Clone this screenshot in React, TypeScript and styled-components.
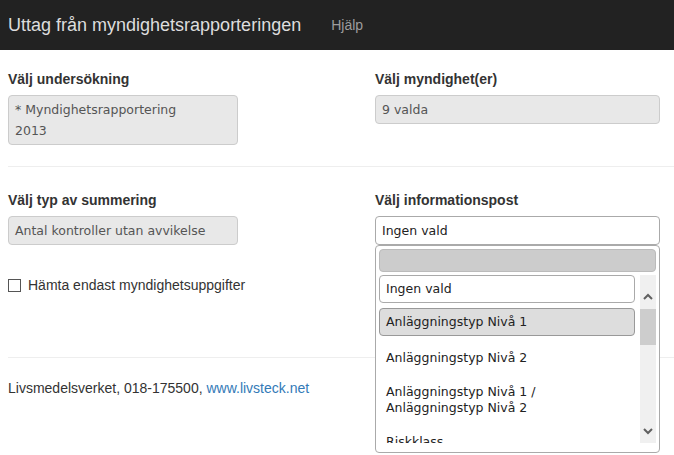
import React from 'react';
import styled, { createGlobalStyle } from 'styled-components';

const Global = createGlobalStyle`
  body { margin: 0; min-height: 455px; font-family: "Liberation Sans", Arial, sans-serif; font-size: 14px; color: #333; background: #fff; }
`;

const Navbar = styled.header`
  height: 50px;
  background: #222;
  display: flex;
  align-items: center;
  padding-left: 8px;
  gap: 30px;
`;
const Brand = styled.div`
  color: #ddd;
  font-size: 18px;
`;
const NavLink = styled.div`
  color: #9d9d9d;
  font-size: 14px;
`;

const Row = styled.div`
  display: grid;
  grid-template-columns: 367px 1fr;
  padding: 0 8px;
`;
const Field = styled.div`
  position: relative;
`;
const Label = styled.div`
  font-weight: bold;
  font-size: 14px;
  height: 17px;
  margin-bottom: 7px;
`;
const Box = styled.div<{ $w: number; $white?: boolean; $padRight?: number }>`
  width: ${p => p.$w}px;
  box-sizing: border-box;
  font-family: "DejaVu Sans", Verdana, sans-serif;
  font-size: 12.5px;
  line-height: 21px;
  padding: 3px ${p => p.$padRight ?? 6}px 3px 6px;
  border: 1px solid ${p => (p.$white ? '#aaa' : '#ccc')};
  border-radius: 4px;
  background: ${p => (p.$white ? '#fff' : '#e8e8e8')};
  color: ${p => (p.$white ? '#222' : '#555')};
`;
const Divider = styled.hr`
  border: 0;
  border-top: 1px solid #eee;
  margin: 21px 0 25px 8px;
`;
const Check = styled.label`
  display: flex;
  align-items: center;
  gap: 7px;
  margin-top: 32px;
  font-size: 14px;
`;
const CheckBox = styled.span`
  width: 11px;
  height: 11px;
  border: 1px solid #555;
  background: #fff;
`;
const Footer = styled.div`
  border-top: 1px solid #eee;
  margin: 64px 0 0 8px;
  padding-top: 22px;
  font-size: 14px;
`;
const Link = styled.a`
  color: #337ab7;
  text-decoration: none;
`;

const Dropdown = styled.div`
  position: absolute;
  left: 0;
  top: 53px;
  width: 285px;
  height: 208px;
  box-sizing: border-box;
  background: #fff;
  border: 1px solid #aaa;
  border-radius: 4px;
  padding: 3px;
  font-family: "DejaVu Sans", Verdana, sans-serif;
  font-size: 12.5px;
  color: #222;
  z-index: 2;
`;
const Search = styled.div`
  height: 23px;
  background: #ccc;
  border: 1px solid #bbb;
  border-radius: 4px;
  box-sizing: border-box;
`;
const ListWrap = styled.div`
  display: flex;
  margin-top: 3px;
  height: 168px;
`;
const List = styled.div`
  flex: 1;
  padding-right: 5px;
  overflow: hidden;
`;
const Item = styled.div<{ $kind?: 'box' | 'active' }>`
  padding: ${p => (p.$kind ? '5px' : '8px')} 6px;
  line-height: 16px;
  margin-bottom: ${p => (p.$kind ? '5px' : '0')};
  border-radius: 4px;
  border: 1px solid ${p => (p.$kind === 'box' ? '#aaa' : p.$kind === 'active' ? '#999' : 'transparent')};
  background: ${p => (p.$kind === 'active' ? '#ddd' : 'transparent')};
`;
const Scrollbar = styled.div`
  width: 16px;
  background: #f0f0f0;
  display: flex;
  flex-direction: column;
  align-items: center;
  justify-content: space-between;
  padding: 18px 0 8px;
  box-sizing: border-box;
  position: relative;
`;
const Thumb = styled.div`
  position: absolute;
  top: 34px;
  left: 0;
  width: 16px;
  height: 36px;
  background: #cdcdcd;
`;

const Arrow = ({ up }: { up?: boolean }) => (
  <svg width="10" height="7" viewBox="0 0 10 7">
    <path d={up ? 'M1 6 L5 2 L9 6' : 'M1 1 L5 5 L9 1'} stroke="#606060" strokeWidth="2" fill="none" />
  </svg>
);

export default function App() {
  return (
    <>
      <Global />
      <Navbar>
        <Brand>Uttag från myndighetsrapporteringen</Brand>
        <NavLink>Hjälp</NavLink>
      </Navbar>
      <div style={{ height: 21 }} />
      <Row>
        <Field>
          <Label>Välj undersökning</Label>
          <Box $w={230} $padRight={40}>* Myndighetsrapportering 2013</Box>
        </Field>
        <Field>
          <Label>Välj myndighet(er)</Label>
          <Box $w={285}>9 valda</Box>
        </Field>
      </Row>
      <Divider />
      <Row>
        <Field>
          <Label>Välj typ av summering</Label>
          <Box $w={230}>Antal kontroller utan avvikelse</Box>
          <Check>
            <CheckBox />
            Hämta endast myndighetsuppgifter
          </Check>
        </Field>
        <Field>
          <Label>Välj informationspost</Label>
          <Box $w={285} $white>Ingen vald</Box>
          <Dropdown>
            <Search />
            <ListWrap>
              <List>
                <Item $kind="box">Ingen vald</Item>
                <Item $kind="active">Anläggningstyp Nivå 1</Item>
                <Item>Anläggningstyp Nivå 2</Item>
                <Item>Anläggningstyp Nivå 1 / Anläggningstyp Nivå 2</Item>
                <Item>Riskklass</Item>
              </List>
              <Scrollbar>
                <Arrow up />
                <Thumb />
                <Arrow />
              </Scrollbar>
            </ListWrap>
          </Dropdown>
        </Field>
      </Row>
      <Footer>
        Livsmedelsverket, 018-175500, <Link href="#">www.livsteck.net</Link>
      </Footer>
    </>
  );
}
